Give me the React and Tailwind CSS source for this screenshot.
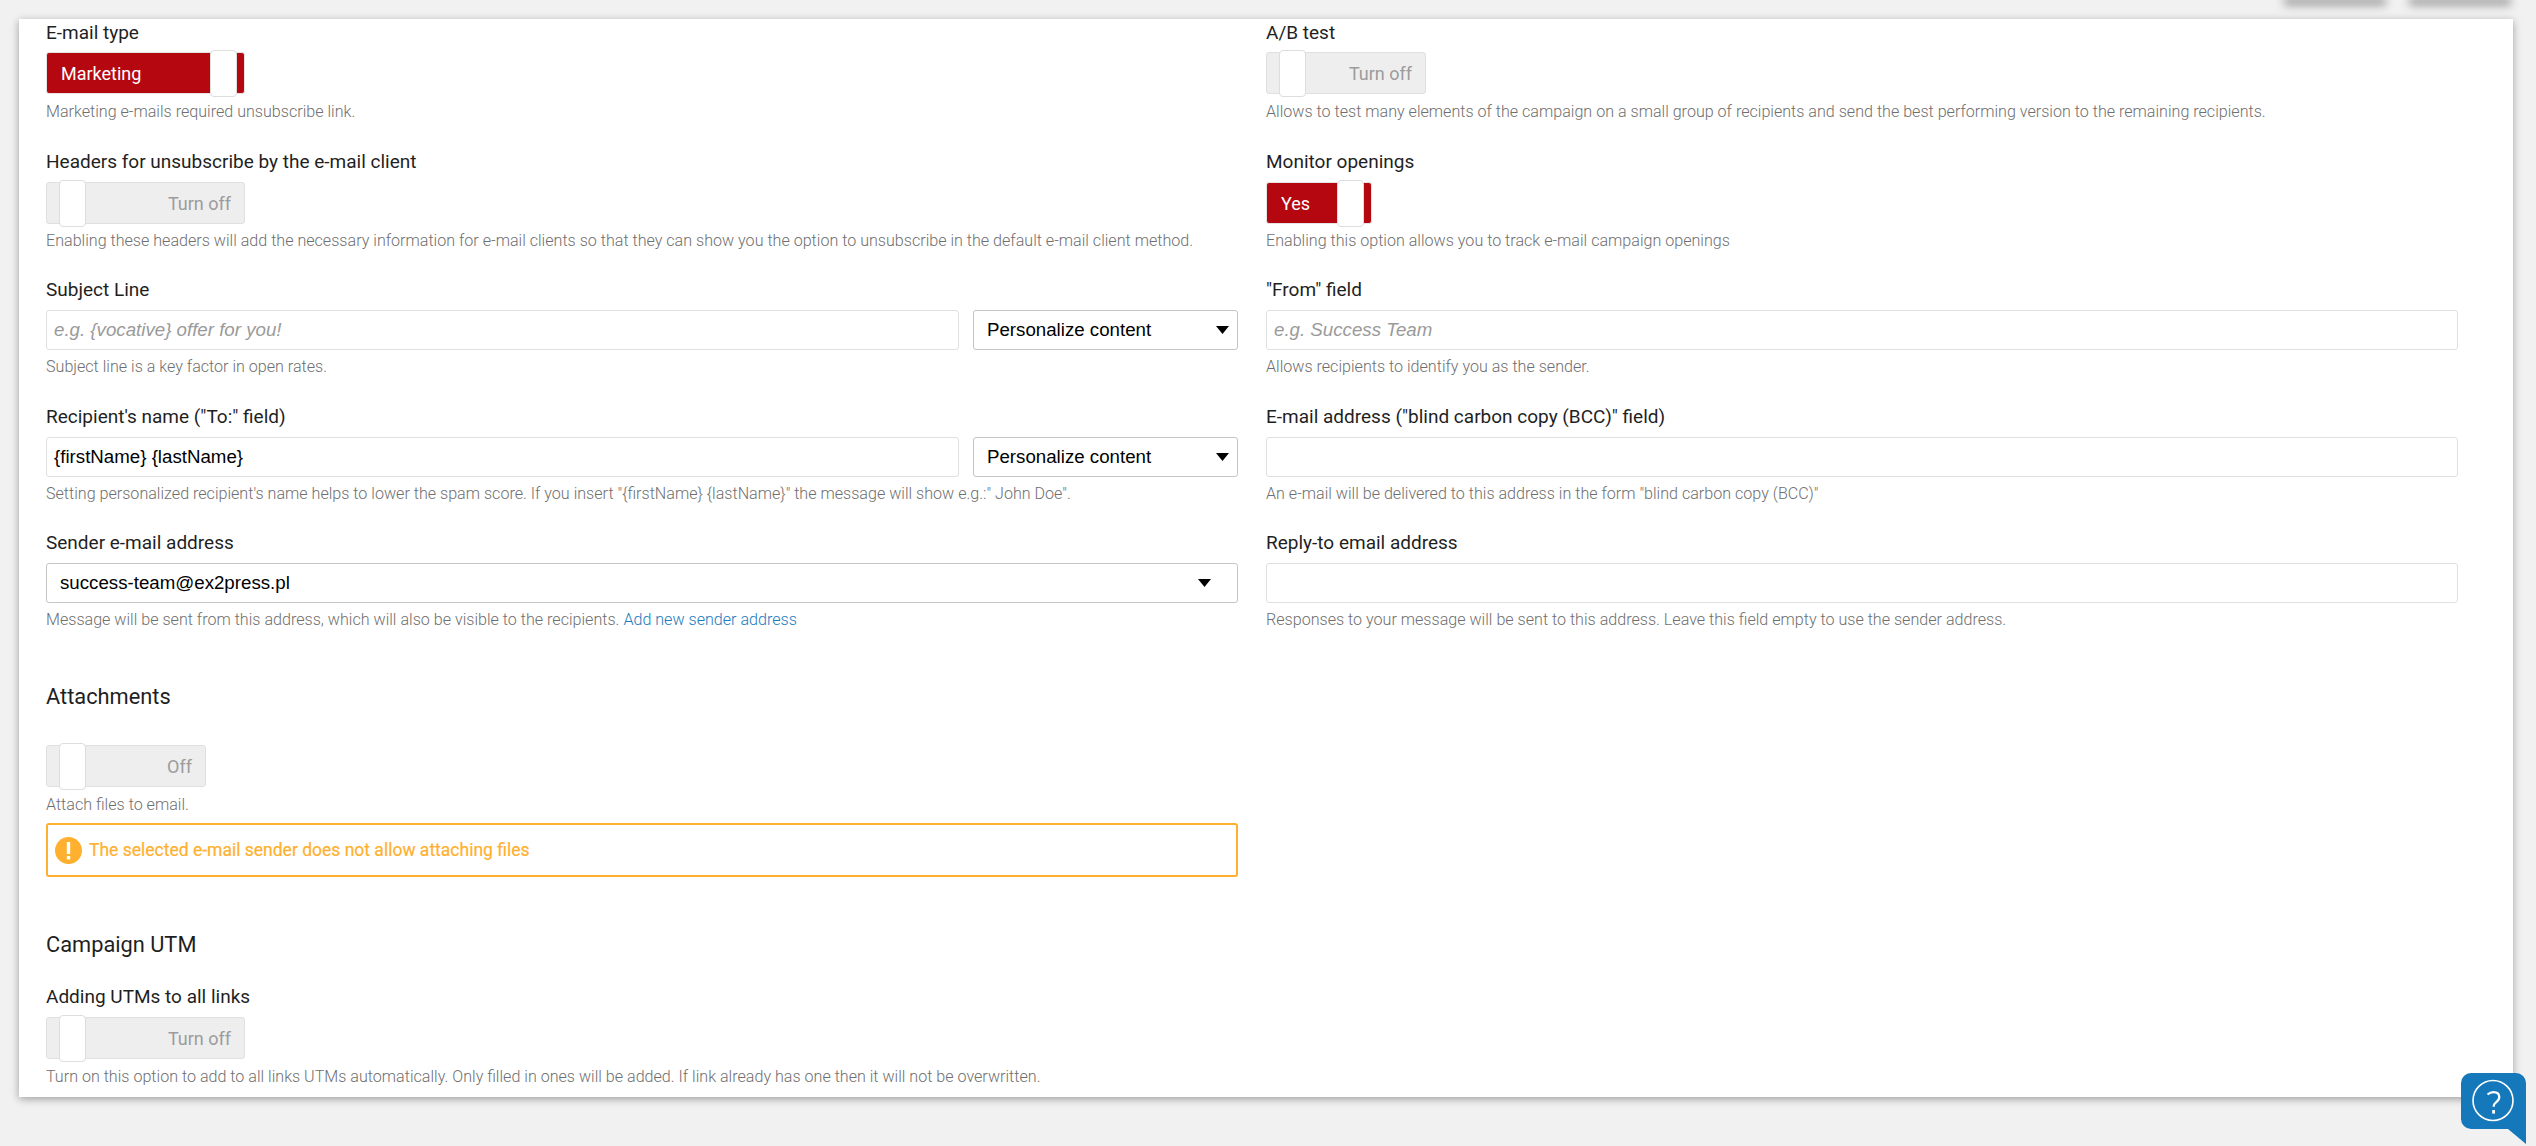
const Toggle = ({ on, label, width }) => {
  if (on) {
    return (
      <div className={`flex items-center h-[42px] rounded-[3px] border border-[#e4e4e4] bg-[#b50710] pl-[14px] pr-[7px] ${width}`}>
        <span className="font-['Roboto',sans-serif] text-[18px] text-white">{label}</span>
        <span className="ml-auto h-[47px] w-[27px] shrink-0 rounded-[4px] border border-[#dddddd] bg-white" />
      </div>
    );
  }
  return (
    <div className={`flex items-center h-[42px] rounded-[3px] border border-[#e0e0e0] bg-[#eeeeee] pl-[12px] pr-[13px] ${width}`}>
      <span className="h-[47px] w-[27px] shrink-0 rounded-[4px] border border-[#dddddd] bg-white" />
      <span className="ml-auto font-['Roboto',sans-serif] text-[18px] text-[#9c9c9c]">{label}</span>
    </div>
  );
};

const Label = ({ children }) => (
  <label className="block h-[28px] font-['Roboto',sans-serif] text-[19px] leading-[28px] text-[#1f1f1f]">{children}</label>
);

const Hint = ({ children, className = '' }) => (
  <p className={`h-[20px] whitespace-nowrap font-['Roboto',sans-serif] text-[16.1px] font-light leading-[20px] text-[#6f6f6f] ${className}`}>{children}</p>
);

const Caret = () => (
  <svg width="13" height="8" viewBox="0 0 13 8" className="shrink-0">
    <path d="M0 0h13L6.5 8z" fill="#000" />
  </svg>
);

const Select = ({ value, className = '' }) => (
  <button type="button" className={`flex h-[40px] items-center justify-between rounded-[3px] border border-[#c4c4c4] bg-white pl-[13px] font-['Liberation_Sans',sans-serif] text-[18.7px] text-black ${className}`}>
    <span>{value}</span>
    <Caret />
  </button>
);

const Input = ({ placeholder, defaultValue, className = '' }) => (
  <input
    placeholder={placeholder}
    defaultValue={defaultValue}
    className={`h-[40px] min-w-0 rounded-[3px] border border-[#e0e0e0] bg-white px-[7px] font-['Liberation_Sans',sans-serif] text-[18.7px] text-black outline-none placeholder:italic placeholder:text-[#9a9a9a] ${className}`}
  />
);

const HelpBubble = () => (
  <svg width="65" height="71" viewBox="0 0 65 71" className="fixed bottom-[2px] right-[10px]">
    <path d="M10 0h45a10 10 0 0 1 10 10v61L47 56H10A10 10 0 0 1 0 46V10A10 10 0 0 1 10 0z" fill="#1578bb" />
    <circle cx="32" cy="27.5" r="20" fill="none" stroke="#fff" strokeWidth="1.6" />
    <path d="M26.5 21.5c1.8-1.6 3.6-2.4 6-2.4 3.6 0 5.8 2 5.8 4.9 0 2.6-1.6 4-3.3 5.3-1.6 1.2-2.4 2.2-2.4 4.4" fill="none" stroke="#fff" strokeWidth="2.2" />
    <rect x="31.2" y="37" width="2.8" height="3.6" fill="#fff" />
  </svg>
);

export default function App() {
  return (
    <div className="h-[1146px] overflow-hidden bg-[#f1f1f1]">
      {/* bottom edge of the buttons scrolled out above the card */}
      <div className="flex h-[19px] justify-end gap-[29px] pr-[28px]">
        <div className="-mt-px h-px w-[96px] shadow-[0_2px_10px_3px_rgba(0,0,0,0.4)]" />
        <div className="-mt-px h-px w-[96px] shadow-[0_2px_10px_3px_rgba(0,0,0,0.4)]" />
      </div>

      <div className="ml-[19px] h-[1078px] w-[2494px] bg-white pl-[27px] pr-[55px] shadow-[0_2px_8px_rgba(0,0,0,0.35)]">
        <div className="grid grid-cols-2 gap-x-[28px]">
          <div>
            <Label>E-mail type</Label>
            <div className="mt-[5px]"><Toggle on label="Marketing" width="w-[199px]" /></div>
            <Hint className="mt-[8px]">Marketing e-mails required unsubscribe link.</Hint>
          </div>
          <div>
            <Label>A/B test</Label>
            <div className="mt-[5px]"><Toggle label="Turn off" width="w-[160px]" /></div>
            <Hint className="mt-[8px]">Allows to test many elements of the campaign on a small group of recipients and send the best performing version to the remaining recipients.</Hint>
          </div>

          <div className="mt-[26px]">
            <Label>Headers for unsubscribe by the e-mail client</Label>
            <div className="mt-[6px]"><Toggle label="Turn off" width="w-[199px]" /></div>
            <Hint className="mt-[7px]">Enabling these headers will add the necessary information for e-mail clients so that they can show you the option to unsubscribe in the default e-mail client method.</Hint>
          </div>
          <div className="mt-[26px]">
            <Label>Monitor openings</Label>
            <div className="mt-[6px]"><Toggle on label="Yes" width="w-[106px]" /></div>
            <Hint className="mt-[7px]">Enabling this option allows you to track e-mail campaign openings</Hint>
          </div>

          <div className="mt-[25px]">
            <Label>Subject Line</Label>
            <div className="mt-[6px] flex gap-[14px]">
              <Input placeholder="e.g. {vocative} offer for you!" className="flex-1" />
              <Select value="Personalize content" className="w-[265px] pr-[8px]" />
            </div>
            <Hint className="mt-[7px]">Subject line is a key factor in open rates.</Hint>
          </div>
          <div className="mt-[25px]">
            <Label>"From" field</Label>
            <div className="mt-[6px] flex"><Input placeholder="e.g. Success Team" className="flex-1" /></div>
            <Hint className="mt-[7px]">Allows recipients to identify you as the sender.</Hint>
          </div>

          <div className="mt-[26px]">
            <Label>Recipient's name ("To:" field)</Label>
            <div className="mt-[6px] flex gap-[14px]">
              <Input defaultValue="{firstName} {lastName}" className="flex-1" />
              <Select value="Personalize content" className="w-[265px] pr-[8px]" />
            </div>
            <Hint className="mt-[7px]">Setting personalized recipient's name helps to lower the spam score. If you insert "{'{firstName}'} {'{lastName}'}" the message will show e.g.:" John Doe".</Hint>
          </div>
          <div className="mt-[26px]">
            <Label>E-mail address ("blind carbon copy (BCC)" field)</Label>
            <div className="mt-[6px] flex"><Input className="flex-1" /></div>
            <Hint className="mt-[7px]">An e-mail will be delivered to this address in the form "blind carbon copy (BCC)"</Hint>
          </div>

          <div className="mt-[25px]">
            <Label>Sender e-mail address</Label>
            <div className="mt-[6px]">
              <Select value="success-team@ex2press.pl" className="w-full pr-[26px]" />
            </div>
            <Hint className="mt-[7px]">
              Message will be sent from this address, which will also be visible to the recipients.{' '}
              <a href="#" className="text-[#1a7bbf]">Add new sender address</a>
            </Hint>
          </div>
          <div className="mt-[25px]">
            <Label>Reply-to email address</Label>
            <div className="mt-[6px] flex"><Input className="flex-1" /></div>
            <Hint className="mt-[7px]">Responses to your message will be sent to this address. Leave this field empty to use the sender address.</Hint>
          </div>
        </div>

        <div className="w-[1192px]">
          <h2 className="mt-[52px] h-[30px] font-['Roboto',sans-serif] text-[21.8px] leading-[30px] text-[#1f1f1f]">Attachments</h2>
          <div className="mt-[33px]"><Toggle label="Off" width="w-[160px]" /></div>
          <Hint className="mt-[8px]">Attach files to email.</Hint>
          <div className="mt-[8px] flex h-[54px] items-center gap-[7px] rounded-[3px] border-2 border-[#ffb02e] pl-[7px]">
            <svg width="27" height="27" viewBox="0 0 27 27" className="shrink-0">
              <circle cx="13.5" cy="13.5" r="13.5" fill="#ffb02e" />
              <rect x="11.8" y="5" width="3.4" height="12" fill="#fff" />
              <rect x="11.8" y="19" width="3.4" height="3.4" fill="#fff" />
            </svg>
            <span className="font-['Roboto',sans-serif] text-[17.5px] text-[#ffb02e] [-webkit-text-stroke:0.2px_#ffb02e]">The selected e-mail sender does not allow attaching files</span>
          </div>

          <h2 className="mt-[53px] h-[30px] font-['Roboto',sans-serif] text-[21.8px] leading-[30px] text-[#1f1f1f]">Campaign UTM</h2>
          <div className="mt-[23px]"><Label>Adding UTMs to all links</Label></div>
          <div className="mt-[6px]"><Toggle label="Turn off" width="w-[199px]" /></div>
          <Hint className="mt-[8px]">Turn on this option to add to all links UTMs automatically. Only filled in ones will be added. If link already has one then it will not be overwritten.</Hint>
        </div>
      </div>

      <HelpBubble />
    </div>
  );
}
